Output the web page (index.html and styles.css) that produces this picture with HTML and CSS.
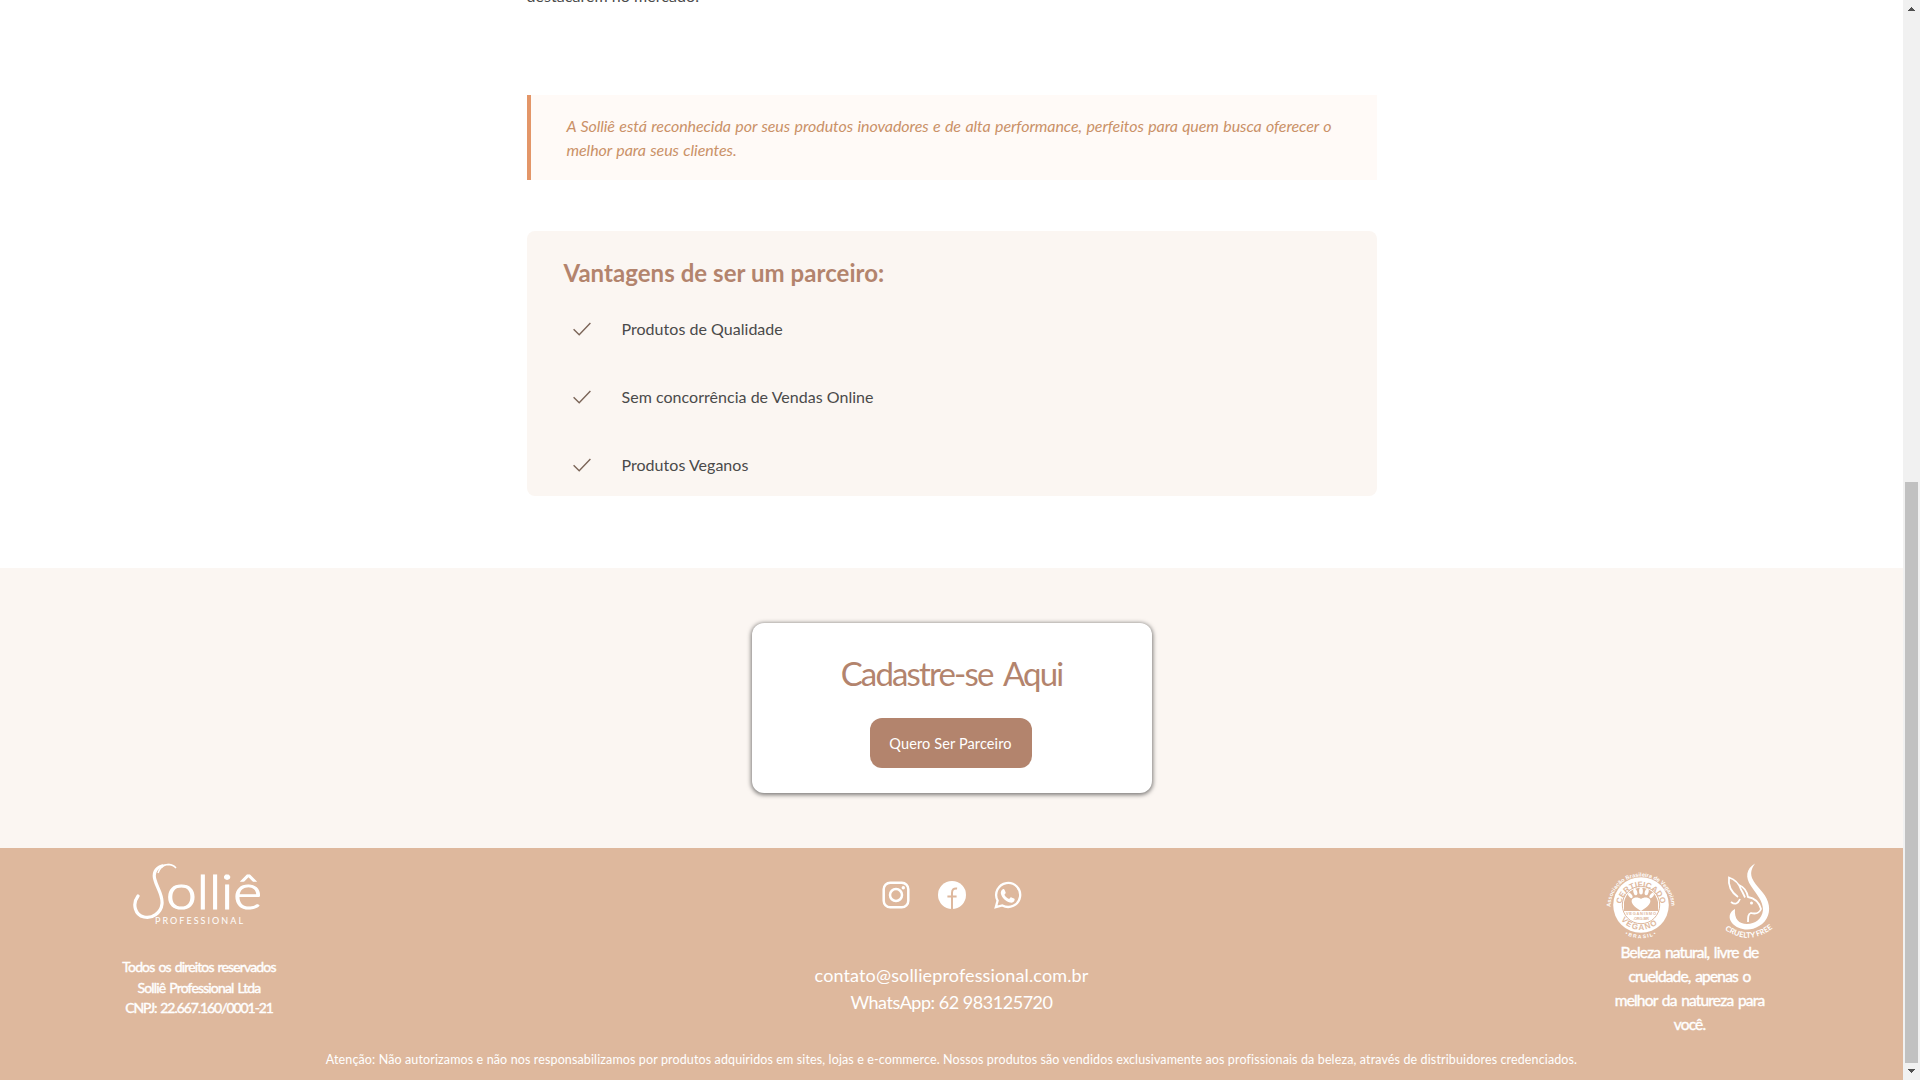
FILE: index.html
```html
<!DOCTYPE html>
<html lang="pt-BR">
<head>
<meta charset="utf-8">
<title>Solliê Professional</title>
<link rel="stylesheet" href="styles.css">
</head>
<body>
<div class="page">
  <main class="content">
    <p class="intro">destacarem no mercado.</p>
    <blockquote class="quote">A Solliê está reconhecida por seus produtos inovadores e de alta performance, perfeitos para quem busca oferecer o<br>melhor para seus clientes.</blockquote>
    <section class="benefits">
      <h2 class="benefits-title">Vantagens de ser um parceiro:</h2>
      <ul class="benefits-list">
        <li><svg class="check" viewBox="0 0 18 14"><path d="M.6 7.2 6.2 12.8 17.4 1"/></svg><span>Produtos de Qualidade</span></li>
        <li><svg class="check" viewBox="0 0 18 14"><path d="M.6 7.2 6.2 12.8 17.4 1"/></svg><span>Sem concorrência de Vendas Online</span></li>
        <li><svg class="check" viewBox="0 0 18 14"><path d="M.6 7.2 6.2 12.8 17.4 1"/></svg><span>Produtos Veganos</span></li>
      </ul>
    </section>
  </main>
  <section class="signup">
    <div class="card">
      <h2 class="card-title">Cadastre-se Aqui</h2>
      <a class="button">Quero Ser Parceiro</a>
    </div>
  </section>
  <footer class="footer">
    <div class="footer-columns">
      <div class="brand">
        <svg class="logo" viewBox="0 0 132 61">
          <path class="swash" d="M29 3C22 5 20 11 22 17c2 8 8 15 7 24-1 9-10 15-18 13C2 52-1 41 5 33"/>
          <path class="swash-thin" d="M25 10c3-9 13-11 18-5C39 1 33 1 28 3"/>
          <text class="logo-name" x="33" y="46" textLength="96" lengthAdjust="spacingAndGlyphs">olliê</text>
          <text class="logo-sub" x="22" y="61" textLength="88">PROFESSIONAL</text>
        </svg>
        <p class="rights">Todos os direitos reservados<br>Solliê Professional Ltda<br><span class="cnpj">CNPJ: 22.667.160/0001-21</span></p>
      </div>
      <div class="contact">
        <div class="social">
          <svg viewBox="0 0 28 28"><rect x="1.7" y="1.7" width="24.6" height="24.6" rx="6.5" class="line"/><circle cx="14" cy="14" r="6" class="line"/><circle cx="21.3" cy="6.8" r="1.7" class="solid"/></svg>
          <svg viewBox="0 0 28 28"><circle cx="14" cy="14" r="14" class="solid"/><path class="cut" d="M14 28.4V12c0-3.600 1.600-4.900 5.100-4.500M9.400 15.500h9.200"/></svg>
          <svg viewBox="0 0 28 28"><path class="line thin" d="M1.800 26.200 3.600 19.600A12 12 0 1 1 8.300 24.400z"/><path class="solid" d="M8.800 8.200c.7-.4 1.400-.2 1.700.5l1.100 2.600c.2.500.1.900-.2 1.300l-1 1.200c1.100 2 2.600 3.400 4.700 4.300l1.200-1.400c.3-.4.700-.5 1.200-.3l2.500 1.200c.6.300.7.700.6 1.300-.5 2.300-2.500 3.100-4.600 2.600-4.500-1.100-8-4.400-9.100-8.700-.4-1.900.4-3.800 1.900-4.600z"/></svg>
        </div>
        <p class="contact-text">contato@sollieprofessional.com.br<br><span class="phone">WhatsApp: 62 983125720</span></p>
      </div>
      <div class="seals">
        <div class="seal-icons">
          <svg class="vegan" viewBox="0 0 70 70">
            <defs>
              <path id="outer-top" d="M4.500 37A30.500 30.500 0 1 1 65.500 37"/>
              <path id="ring-top" d="M15.500 34A19.700 19.700 0 0 1 54.500 34"/>
              <path id="ring-bottom" d="M11 43A25.500 25.500 0 0 0 59 43"/>
              <path id="outer-bottom" d="M15 61.500A33 33 0 0 0 55 61.500"/>
            </defs>
            <circle cx="35" cy="35" r="27.800" class="solid"/>
            <circle cx="35" cy="35" r="18.700" class="tan-line"/>
            <path class="tan" d="M18 41V32C22 13 48 13 52 32V41z"/>
            <text class="seal-outer"><textPath href="#outer-top" textLength="98">Associação Brasileira de Veganismo</textPath></text>
            <text class="seal-ring"><textPath href="#ring-top" textLength="56">CERTIFICADO</textPath></text>
            <text class="seal-ring"><textPath href="#ring-bottom" startOffset="8" textLength="41">VEGANO</textPath></text>
            <text class="seal-brasil"><textPath href="#outer-bottom" startOffset="5" textLength="32">•BRASIL•</textPath></text>
            <path class="solid" d="M35 41C27.500 36.500 24.500 32.500 26 29.500 28 26.800 32.500 27 35 29 37.500 27 42 26.800 44 29.500 45.500 32.500 42.500 36.500 35 41z"/>
            <g class="solid">
              <ellipse cx="24.300" cy="25.500" rx="1.600" ry="3" transform="rotate(-38 24.300 25.500)"/>
              <ellipse cx="29.300" cy="22" rx="1.900" ry="3.400" transform="rotate(-15 29.300 22)"/>
              <ellipse cx="35" cy="21" rx="1.900" ry="3.600"/>
              <ellipse cx="40.700" cy="22" rx="1.900" ry="3.400" transform="rotate(15 40.700 22)"/>
              <ellipse cx="45.700" cy="25.500" rx="1.600" ry="3" transform="rotate(38 45.700 25.500)"/>
            </g>
            <text class="seal-small" x="20" y="45.200" textLength="30">VEGANISMO</text>
            <text class="seal-small" x="27" y="49.800" textLength="16">.ORG.BR</text>
          </svg>
          <svg class="rabbit" viewBox="0 0 48 77">
            <defs><path id="free-arc" d="M-1 66Q24 84 48 65"/></defs>
            <path class="solid" d="M30 .5C21 6 20 14 26 23c6 9 12 15 12 24-1 9-8 14-16 14C14 61 9 56 10 46 4 49 3 55 7 60c6 7 18 9 27 3 9-5 12-15 9-24C40 29 31 24 27 15 25 9 27 5 30 .5z"/>
            <path class="line hare" d="M13 34C6 29 3 22 4 14.500c6 2 10 6 12 12 2 3 3 6 4 8M14 22c5 2 8 7 9 12 6 1 11 5 13 12-2 5-6 5-10 4-3 1-3 4-3 9M15 36c-2 5-5 6-9 3"/>
            <circle cx="26.500" cy="40" r="1.500" class="solid"/>
            <text class="seal-free"><textPath href="#free-arc" startOffset="1" textLength="52" lengthAdjust="spacingAndGlyphs">CRUELTY FREE</textPath></text>
          </svg>
        </div>
        <p class="nature">Beleza natural, livre de<br>crueldade, apenas o<br>melhor da natureza para<br>você.</p>
      </div>
    </div>
    <p class="notice">Atenção: Não autorizamos e não nos responsabilizamos por produtos adquiridos em sites, lojas e e-commerce. Nossos produtos são vendidos exclusivamente aos profissionais da beleza, através de distribuidores credenciados.</p>
  </footer>
</div>
<div class="scrollbar">
  <svg viewBox="0 0 17 17"><path d="M8 7h1v1h1v1h1v1h1v1H5v-1h1V9h1V8h1z"/></svg>
  <div class="thumb"></div>
  <svg viewBox="0 0 17 17"><path d="M5 6h7v1h-1v1h-1v1H9v1H8V9H7V8H6V7H5z"/></svg>
</div>
</body>
</html>
```
FILE: styles.css
```css
* { box-sizing: border-box; }
body {
  margin: 0;
  height: 1080px;
  display: flex;
  overflow: hidden;
  background: #fff;
  font-family: Lato, "Open Sans", sans-serif;
}
p, h2, ul, blockquote { margin: 0; padding: 0; }
svg { display: block; flex: none; }

.page { flex: 1; display: flex; flex-direction: column; }

.content { height: 568px; width: 850px; margin: 0 auto; color: #4a4a4a; font-size: 16px; }
.intro { height: 24px; line-height: 24px; margin-top: -16px; margin-bottom: 87px; letter-spacing: .05px; }
.quote {
  height: 85px;
  padding: 19px 0 0 36px;
  border-left: 4px solid #e39668;
  background: #fffaf7;
  color: #ca9167;
  font-style: italic;
  line-height: 24px;
  letter-spacing: -.07px;
  word-spacing: .75px;
  white-space: nowrap;
}
.benefits {
  height: 265px;
  margin-top: 51px;
  padding: 25px 0 0 37px;
  border-radius: 8px;
  background: #fbf6f2;
}
.benefits-title { color: #b3846d; font-size: 24px; line-height: 34px; font-weight: 700; letter-spacing: .05px; }
.benefits-list { list-style: none; display: flex; flex-direction: column; gap: 44px; margin-top: 27px; }
.benefits-list li { display: flex; align-items: center; gap: 31px; height: 24px; padding-left: 9px; letter-spacing: .03px; }
.benefits-list span { padding-bottom: 2px; }
.check { width: 18px; height: 14px; }
.check path { fill: none; stroke: #7b6558; stroke-width: 1.4; }

.signup { height: 280px; display: flex; justify-content: center; align-items: center; background: #fbf6f2; }
.card {
  width: 400px;
  height: 170px;
  display: flex;
  flex-direction: column;
  align-items: center;
  border-radius: 12px;
  background: #fff;
  box-shadow: 0 1px 4px 1px rgba(0, 0, 0, .5);
}
.card-title { margin-top: 29px; height: 41px; line-height: 42px; font-size: 33px; font-weight: 400; letter-spacing: -1.85px; word-spacing: 5px; color: #b3846d; }
.button {
  width: 162px;
  height: 50px;
  margin: 25px 2px 0 0;
  border-radius: 12px;
  background: #b3846d;
  color: #fff;
  font-size: 14.500px;
  line-height: 51px;
  letter-spacing: .12px;
  text-align: center;
}

.footer { flex: 1; display: flex; flex-direction: column; background: #deb89d; color: #fff; text-align: center; }
.footer-columns { height: 200px; display: grid; grid-template-columns: 398px 1fr 427px; }
.brand, .contact, .seals { display: flex; flex-direction: column; align-items: center; }
.contact { padding-left: 29px; }

.logo { width: 132px; height: 61px; margin-top: 15px; overflow: hidden; }
.swash { fill: none; stroke: #fff; stroke-width: 3.2; stroke-linecap: round; }
.swash-thin { fill: none; stroke: #fff; stroke-width: 1.4; }
.logo-name { font: 300 48px Lato, sans-serif; fill: #fff; stroke: #fff; stroke-width: 1.2; }
.logo-sub { font: 400 9px Lato, sans-serif; fill: #fff; }
.rights { margin-top: 33px; font-size: 14px; line-height: 20.500px; letter-spacing: -.86px; word-spacing: 1.300px; -webkit-text-stroke: .4px #fff; }
.cnpj { letter-spacing: -1.07px; }

.social { display: flex; gap: 28px; margin-top: 33px; }
.social svg { width: 28px; height: 28px; }
.contact-text { margin-top: 53px; font-size: 18px; line-height: 27px; letter-spacing: .13px; }
.phone { letter-spacing: -.47px; }

.seal-icons { display: flex; gap: 49px; margin-top: 15px; }
.vegan { width: 70px; height: 70px; margin-top: 7px; overflow: visible; }
.rabbit { width: 48px; height: 77px; overflow: visible; }
.solid { fill: #fff; }
.line { fill: none; stroke: #fff; stroke-width: 2.500; }
.thin { stroke-width: 2.300; }
.hare { stroke-width: 1.800; }
.cut { fill: none; stroke: #deb89d; stroke-width: 2; }
.tan { fill: #deb89d; }
.tan-line { fill: none; stroke: #deb89d; stroke-width: 1; }
.seal-outer { font: 700 5.600px "Liberation Sans", sans-serif; fill: #fff; }
.seal-ring { font: 700 8px "Liberation Sans", sans-serif; fill: #deb89d; }
.seal-brasil { font: 700 5px "Liberation Sans", sans-serif; fill: #fff; }
.seal-small { font: 700 4px "Liberation Sans", sans-serif; fill: #deb89d; }
.seal-free { font: 700 7.500px Lato, sans-serif; fill: #fff; }
.nature { font-size: 15.500px; line-height: 24px; letter-spacing: -.82px; word-spacing: 1.500px; -webkit-text-stroke: .4px #fff; }

.notice { margin-top: 4px; font-size: 12.500px; line-height: 16px; letter-spacing: .125px; white-space: nowrap; }

.scrollbar { width: 17px; display: flex; flex-direction: column; align-items: center; background: #f1f1f1; }
.scrollbar svg { width: 17px; height: 17px; fill: #505050; }
.thumb { width: 13px; height: 581px; margin-top: 465px; background: #c1c1c1; }
```
